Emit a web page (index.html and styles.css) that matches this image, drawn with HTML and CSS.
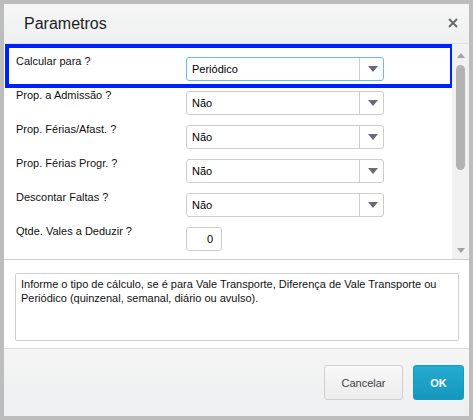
FILE: index.html
```html
<!DOCTYPE html>
<html lang="pt">
<head>
<meta charset="utf-8">
<title>Parametros</title>
<link rel="stylesheet" href="styles.css">
</head>
<body>
<div class="dialog">
  <header class="dlg-head">
    <h1 class="dlg-title">Parametros</h1>
    <span class="dlg-close" aria-label="Fechar">
      <svg width="10" height="10" viewBox="0 0 10 10"><path d="M1 1L9 9M9 1L1 9" stroke="#6a6a6a" stroke-width="2" fill="none"/></svg>
    </span>
  </header>
  <div class="dlg-scroll">
    <div class="form">
      <div class="row row-active">
        <span class="highlight"></span>
        <label class="lbl">Calcular para ?</label>
        <div class="select focused"><span class="sel-val">Periódico</span><span class="sel-btn"><i class="tri"></i></span></div>
      </div>
      <div class="row">
        <label class="lbl">Prop. a Admissão ?</label>
        <div class="select"><span class="sel-val">Não</span><span class="sel-btn"><i class="tri"></i></span></div>
      </div>
      <div class="row">
        <label class="lbl">Prop. Férias/Afast. ?</label>
        <div class="select"><span class="sel-val">Não</span><span class="sel-btn"><i class="tri"></i></span></div>
      </div>
      <div class="row">
        <label class="lbl">Prop. Férias Progr. ?</label>
        <div class="select"><span class="sel-val">Não</span><span class="sel-btn"><i class="tri"></i></span></div>
      </div>
      <div class="row">
        <label class="lbl">Descontar Faltas ?</label>
        <div class="select"><span class="sel-val">Não</span><span class="sel-btn"><i class="tri"></i></span></div>
      </div>
      <div class="row">
        <label class="lbl">Qtde. Vales a Deduzir ?</label>
        <div class="num">0</div>
      </div>
    </div>
    <div class="scrollbar">
      <i class="sb-up"></i>
      <span class="sb-thumb"></span>
      <span class="sb-fill"></span>
      <i class="sb-down"></i>
    </div>
  </div>
  <div class="help-wrap">
    <div class="help">Informe o tipo de cálculo, se é para Vale Transporte, Diferença de Vale Transporte ou Periódico (quinzenal, semanal, diário ou avulso).</div>
  </div>
  <footer class="dlg-foot">
    <button class="btn btn-cancel">Cancelar</button>
    <button class="btn btn-ok">OK</button>
  </footer>
</div>
</body>
</html>
```
FILE: styles.css
```css
* { box-sizing: border-box; }
html, body { margin: 0; padding: 0; }
body {
  background: #bdbdbd;
  font-family: "Liberation Sans", Arial, sans-serif;
  width: 473px;
  height: 420px;
  padding: 4px;
  overflow: hidden;
}
.dialog {
  width: 465px;
  height: 412px;
  background: #fff;
  display: flex;
  flex-direction: column;
}
.dlg-head {
  height: 40px;
  flex: none;
  display: flex;
  align-items: center;
  justify-content: space-between;
  padding: 0 11px 0 20px;
  background: linear-gradient(#f6f6f6, #eff0f1);
  border-bottom: 1px solid #e2e2e2;
}
.dlg-title {
  margin: 0;
  font-size: 16px;
  font-weight: normal;
  color: #1e1e1e;
  line-height: 20px;
  padding-top: 0;
}
.dlg-close { display: flex; width: 10px; height: 10px; margin-top: -1px; }

.dlg-scroll {
  height: 216px;
  flex: none;
  display: flex;
  border-bottom: 1px solid #cfcfcf;
}
.form {
  flex: 1;
  padding: 4px 0 0 1px;
  overflow: hidden;
}
.row {
  position: relative;
  height: 34px;
  display: flex;
  align-items: flex-start;
  padding-left: 11px;
}
.highlight {
  position: absolute;
  left: 0;
  top: -4px;
  width: 449px;
  height: 44px;
  border: 4px solid #0021ff;
  pointer-events: none;
}
.lbl {
  width: 170px;
  flex: none;
  font-size: 11px;
  line-height: 14px;
  padding-top: 6px;
  color: #111;
}
.select {
  margin-top: 9px;
  width: 198px;
  height: 24px;
  border: 1px solid #cdcdcd;
  border-radius: 3px;
  display: flex;
  background: #fff;
}
.select.focused { border-color: #66c2dc; }
.sel-val {
  flex: 1;
  font-size: 11px;
  line-height: 22px;
  padding-left: 5px;
  color: #000;
}
.sel-btn {
  width: 24px;
  border-left: 1px solid #cdcdcd;
  display: flex;
  align-items: center;
  justify-content: center;
}
.tri {
  width: 0;
  height: 0;
  border-left: 5px solid transparent;
  border-right: 5px solid transparent;
  border-top: 6px solid #676b76;
  margin-left: 2px;
}
.num {
  margin-top: 9px;
  width: 36px;
  height: 24px;
  border: 1px solid #cdcdcd;
  border-radius: 3px;
  font-size: 11px;
  line-height: 22px;
  text-align: right;
  padding-right: 8px;
  color: #000;
}
.scrollbar {
  width: 17px;
  flex: none;
  background: #f1f1f1;
  display: flex;
  flex-direction: column;
  align-items: center;
  padding: 9px 0 6px;
}
.sb-up, .sb-down {
  width: 0; height: 0;
  border-left: 4px solid transparent;
  border-right: 4px solid transparent;
}
.sb-up { border-bottom: 5px solid #a3a3a3; }
.sb-down { border-top: 5px solid #a3a3a3; }
.sb-thumb {
  margin-top: 7px;
  width: 9px;
  height: 105px;
  border-radius: 5px;
  background: #b3b3b3;
}
.sb-fill { flex: 1; }

.help-wrap {
  flex: none;
  height: 89px;
  padding: 13px 10px 0 11px;
  border-bottom: 1px solid #dcdcdc;
}
.help {
  height: 68px;
  border: 1px solid #cfcfcf;
  border-radius: 2px;
  padding: 3px 5px;
  font-size: 11px;
  line-height: 14px;
  color: #111;
}
.dlg-foot {
  flex: 1;
  display: flex;
  justify-content: flex-end;
  align-items: flex-start;
  gap: 10px;
  padding: 16px 5px 0 0;
  background: linear-gradient(#f4f5f4, #eeeff1);
}
.btn {
  height: 35px;
  border-radius: 3px;
  font-family: "Liberation Sans", Arial, sans-serif;
  font-size: 11px;
  padding: 0;
}
.btn-cancel {
  width: 79px;
  border: 1px solid #cfcfcf;
  background: linear-gradient(#f8f8f8, #ececec);
  color: #3d3d45;
}
.btn-ok {
  width: 51px;
  border: 1px solid #1899be;
  background: linear-gradient(#25abd0, #1597bd);
  color: #fff;
  font-weight: bold;
}
```
